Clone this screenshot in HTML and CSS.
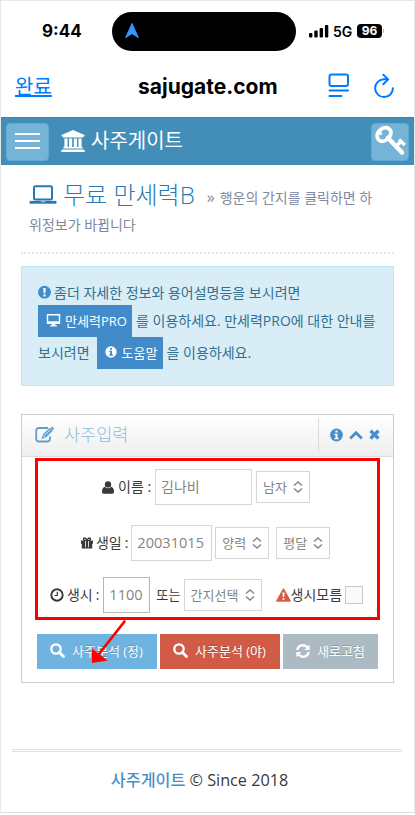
FILE: index.html
```html
<!DOCTYPE html>
<html lang="ko">
<head>
  <meta charset="UTF-8" />
  <meta name="viewport" content="width=device-width, initial-scale=1.0"/>
  <title>사주게이트</title>
  <link rel="stylesheet" href="styles.css">
</head>
<body>
  <div class="screen">
    <div class="status-bar">
      <span class="time">9:44</span>
      <div class="island">
        <svg width="14" height="16" viewBox="0 0 14 16"><path d="M7 .5 13.3 14.6 7 10.6.7 14.6Z" fill="#3598fe" stroke="#3598fe" stroke-linejoin="round"/></svg>
      </div>
      <svg class="signal" width="20" height="13" viewBox="0 0 20 13" fill="#000"><rect x="0" y="8" width="3.4" height="4.5" rx="1"/><rect x="5.3" y="5.5" width="3.4" height="7" rx="1"/><rect x="10.6" y="3" width="3.4" height="9.5" rx="1"/><rect x="15.9" y="0" width="3.4" height="12.5" rx="1"/></svg>
      <span class="network">5G</span>
      <span class="battery">96</span>
      <i class="battery-cap"></i>
    </div>

    <div class="browser-bar">
      <a class="done" href="#">완료</a>
      <span class="address">sajugate.com</span>
      <svg class="reader" width="22" height="26" viewBox="0 0 22 26" fill="none" stroke="#007aff" stroke-width="2" stroke-linecap="round"><rect x="1.5" y="1.5" width="18.5" height="11.5" rx="2"/><path d="M1.5 17.6H20M1.5 23H13.5"/></svg>
      <svg class="reload" width="22" height="26" viewBox="0 0 22 26" fill="none" stroke="#007aff" stroke-width="2" stroke-linecap="round" stroke-linejoin="round"><path d="M14.8 6.3H10.6A8.9 8.9 0 1 0 19.9 15.2M10.3 1.7 15.2 6.4 10.3 11.3"/></svg>
    </div>

    <div class="navbar">
      <button class="menu-btn"><i></i><i></i><i></i></button>
      <svg class="bank" width="24" height="24" viewBox="0 0 24 24" fill="#fff"><path d="M12 1 23.5 6V7.6H22V8.5H2V7.6H.5V6ZM3.4 9.5H6.6V18H8V9.5H11.2V18H12.8V9.5H16V18H17.4V9.5H20.6V18H21.6V19.6H2.4V18H3.4ZM1.6 20.4H22.4L23.8 21.6V23H.2V21.6Z"/></svg>
      <span class="brand">사주게이트</span>
      <button class="key-btn">
        <svg width="34" height="34" viewBox="0 0 34 34" fill="none" stroke="#fff"><path d="M4.2 12.5C3.6 8.2 8.8 3.2 13 3.6 17.3 4 19.3 8.3 16.8 12.3 14.5 16 10.6 18 7.6 17 5.5 16.2 4.5 14.6 4.2 12.5Z" stroke-width="3.8"/><circle cx="7.6" cy="9.6" r="1.6" fill="#fff" stroke="none"/><path d="M15 14 29 28.5" stroke-width="4.6" stroke-linecap="round"/><path d="M23.5 22 28.5 17M26 15.6 31.8 21" stroke-width="3.4"/></svg>
      </button>
    </div>

    <div class="page-header">
      <h1>
        <svg class="laptop" width="28" height="20" viewBox="0 0 28 20" fill="none" stroke="#2679b5" stroke-width="2"><rect x="5" y="1.3" width="18" height="13.2" rx="1.5"/><path d="M.6 17.3H27.4" stroke-width="2.8"/><path d="M12 16.7H16" stroke="#fff" stroke-width=".7"/></svg>
        <span class="title">무료 만세력B</span>
        <small><span class="raquo">»</span>행운의 간지를 클릭하면 하</small>
      </h1>
      <small>위정보가 바뀝니다</small>
    </div>

    <div class="alert">
      <div class="alert-line">
        <svg class="mark" width="13" height="14" viewBox="0 0 13 14"><circle cx="6.5" cy="7.2" r="6.4" fill="#428bca"/><path d="M5.2 3H7.8L7.3 8.2H5.7ZM5.5 9.3H7.5V11.4H5.5Z" fill="#fff"/></svg>
        <span>좀더 자세한 정보와 용어설명등을 보시려면</span>
      </div>
      <div class="alert-line">
        <a class="btn-pro"><svg width="15" height="13" viewBox="0 0 15 13"><path d="M1.5.8H13.5V9H1.5Z" fill="none" stroke="#fff" stroke-width="1.4"/><path d="M1 7.3H14V9.7H1ZM6 9H9L9.5 11.5H11V12.6H4V11.5H5.5Z" fill="#fff"/></svg>만세력PRO</a>
        <span>를 이용하세요. 만세력PRO에 대한 안내를</span>
      </div>
      <div class="alert-line">
        <span>보시려면</span>
        <a class="btn-help"><svg width="12" height="12" viewBox="0 0 12 12"><circle cx="6" cy="6" r="5.7" fill="#fff"/><path d="M5 2H7V3.7H5ZM4.2 4.8H7V8.6H8V9.8H4.2V8.6H5.1V5.9H4.2Z" fill="#428bca"/></svg>도움말</a>
        <span>을 이용하세요.</span>
      </div>
    </div>

    <div class="widget">
      <div class="widget-header">
        <svg class="edit" width="20" height="17" viewBox="0 0 20 17" fill="none" stroke="#629fca"><path d="M13 2H4Q1.2 2 1.2 4.8V12.7Q1.2 15.5 4 15.5H12.2Q15 15.5 15 12.7V10.5" stroke-width="1.8"/><path d="M9.2 10.3 16.2 3.3" stroke-width="4.4"/><path d="M16.3 1.2 18.6 3.5" stroke-width="2.2"/><path d="M6.5 12.9 7.4 9.4 10 12Z" fill="#629fca" stroke="none"/><path d="M9.5 9.3 14.8 4" stroke="#fff" stroke-width=".8"/></svg>
        <h5>사주입력</h5>
        <div class="widget-toolbar">
          <svg width="13" height="14" viewBox="0 0 12 12"><circle cx="6" cy="6" r="5.9" fill="#478fca"/><path d="M5 1.8H7V3.6H5ZM4.1 4.8H7V8.7H8V10H4.1V8.7H5.1V6H4.1Z" fill="#fff"/></svg>
          <svg width="14" height="10" viewBox="0 0 14 10" fill="none" stroke="#478fca" stroke-width="2.8"><path d="M1.2 8.4 7 2.8 12.8 8.4"/></svg>
          <svg width="11" height="11" viewBox="0 0 11 11" stroke="#478fca" stroke-width="3.4"><path d="M1.5 1.7 9.5 9.5M9.5 1.7 1.5 9.5"/></svg>
        </div>
      </div>

      <div class="widget-main">
        <div class="row row-name">
          <svg width="12" height="13" viewBox="0 0 12 13" fill="#393939"><circle cx="6" cy="3.4" r="3.2"/><path d="M2.7 5.7Q6 9 9.3 5.7 12 6.6 12 11 12 12.8 10.4 12.8H1.6Q0 12.8 0 11 0 6.6 2.7 5.7Z"/></svg>
          <label>이름 :</label>
          <input class="name" type="text" value="김나비" />
          <div class="select">남자<svg class="sort" viewBox="0 0 10 12"><path d="M1 4.5 5 1 9 4.5M1 7.5 5 11 9 7.5"/></svg></div>
        </div>
        <div class="row row-birth">
          <svg width="12" height="12" viewBox="0 0 12 12" fill="#393939"><path d="M0 3.6H12V6.8H11.2V11.5H.8V6.8H0Z"/><path d="M6 3.6C2 4 1.8 1 3.6 1 5 1 5.6 2.5 6 3.6 6.4 2.5 7 1 8.4 1 10.2 1 10 4 6 3.6Z" fill="none" stroke="#393939" stroke-width="1.3"/><path d="M4.5 4V10.3M7.5 4V10.3" stroke="#fff" stroke-width=".8"/></svg>
          <label>생일 :</label>
          <input class="birth" type="text" value="20031015" />
          <div class="select">양력<svg class="sort" viewBox="0 0 10 12"><path d="M1 4.5 5 1 9 4.5M1 7.5 5 11 9 7.5"/></svg></div>
          <div class="select leap">평달<svg class="sort" viewBox="0 0 10 12"><path d="M1 4.5 5 1 9 4.5M1 7.5 5 11 9 7.5"/></svg></div>
        </div>
        <div class="row row-time">
          <svg width="14" height="14" viewBox="0 0 14 14" fill="none" stroke="#393939"><circle cx="7" cy="7" r="5.7" stroke-width="1.9"/><path d="M7.3 3.7V7.5H4.6" stroke-width="1.2"/></svg>
          <label>생시 :</label>
          <input class="hour" type="text" value="1100" />
          <span class="or">또는</span>
          <div class="select ganji">간지선택<svg class="sort" viewBox="0 0 10 12"><path d="M1 4.5 5 1 9 4.5M1 7.5 5 11 9 7.5"/></svg></div>
          <svg class="warn" width="15" height="14" viewBox="0 0 15 14"><path d="M7.5 1 14.2 13H.8Z" fill="#dd5a43" stroke="#dd5a43" stroke-width="1.4" stroke-linejoin="round"/><path d="M6.4 4.6H8.6L8.2 9H6.8ZM6.6 10H8.4V11.8H6.6Z" fill="#fff"/></svg>
          <span class="unknown">생시모름</span>
          <i class="check"></i>
        </div>
        <div class="actions">
          <button class="btn-info"><svg width="15" height="15" viewBox="0 0 15 15" fill="none" stroke="#fff"><circle cx="6" cy="6" r="4.7" stroke-width="2.3"/><path d="M9.3 9.3 13.5 13.5" stroke-width="2.8" stroke-linecap="round"/></svg>사주분석 (정)</button>
          <button class="btn-danger"><svg width="15" height="15" viewBox="0 0 15 15" fill="none" stroke="#fff"><circle cx="6" cy="6" r="4.7" stroke-width="2.3"/><path d="M9.3 9.3 13.5 13.5" stroke-width="2.8" stroke-linecap="round"/></svg>사주분석 (야)</button>
          <button class="btn-reset"><svg width="14" height="14" viewBox="0 0 14 14"><path d="M1.3 6C2 1 8-.2 11.4 3.3M12.7 8C12 13 6 14.2 2.6 10.7" fill="none" stroke="#fff" stroke-width="2.3"/><path d="M13.6.8V6H8.4ZM.4 13.2V8H5.6Z" fill="#fff"/></svg>새로고침</button>
        </div>
      </div>
    </div>

    <div class="footer"><b>사주게이트</b> © Since 2018</div>

    <!-- guide marks over the form -->
    <div class="guide-box"></div>
    <svg class="guide-arrow" width="40" height="48" viewBox="0 0 40 48"><path d="M35.5 3.5 10 36" stroke="#f00" stroke-width="2.7" stroke-linecap="round"/><path d="M3 45 3 30.5 18.5 42.5Z" fill="#f00"/></svg>
  </div>
</body>
</html>
```
FILE: styles.css
```css
* {
  box-sizing: border-box;
}

body {
  margin: 0;
  background: #fff;
  font-family: "Open Sans", "Noto Sans CJK KR", sans-serif;
  font-size: 14px;
  color: #393939;
}

svg {
  display: block;
  flex: none;
}

.screen {
  position: relative;
  width: 415px;
  height: 813px;
  border: 1px solid #e8e8e8;
  border-bottom-color: #ddd;
  overflow: hidden;
  white-space: nowrap;
}

/* phone bars */
.status-bar {
  display: flex;
  align-items: center;
  height: 59px;
  padding: 1px 0 0 41px;
  font-family: Inter, sans-serif;
  font-weight: 700;
  color: #000;
}

.time {
  width: 70px;
  font-size: 17px;
}

.island {
  width: 184px;
  height: 39px;
  padding: 11px 0 0 13px;
  border-radius: 20px;
  background: #000;
}

.signal {
  margin-left: 13px;
}

.network {
  width: 24px;
  margin-left: 4px;
  font-size: 14px;
  font-weight: 600;
}

.battery {
  width: 25px;
  height: 14px;
  border-radius: 4px;
  background: #000;
  color: #fff;
  font-size: 12px;
  line-height: 14px;
  text-align: center;
}

.battery-cap {
  width: 1px;
  height: 4px;
  margin-left: 1px;
  background: #bbb;
}

.browser-bar {
  display: flex;
  align-items: center;
  height: 57px;
  padding-left: 14px;
  padding-bottom: 5px;
}

.done {
  width: 123px;
  color: #007aff;
  font-family: "Noto Sans CJK KR", sans-serif;
  font-size: 20px;
  line-height: 28px;
  text-underline-offset: 1px;
}

.address {
  width: 190px;
  color: #000;
  font-family: Inter, sans-serif;
  font-size: 21px;
  font-weight: 700;
}

.reload {
  margin-left: 23px;
}

/* site */
.navbar {
  display: flex;
  align-items: center;
  height: 48px;
  padding: 0 5px;
  border-top: 1px solid #3d7fa6;
  background: #438eb9;
}

.navbar button {
  height: 38px;
  border: 1px solid #62a8d1;
  border-radius: 4px;
  background: #75b3d7;
}

.menu-btn {
  display: flex;
  flex-direction: column;
  justify-content: center;
  gap: 4px;
  width: 43px;
  padding: 0 8px 2px;
}

.menu-btn i {
  height: 2px;
  background: #fff;
}

.menu-btn i + i {
  margin-top: 1px;
}

.bank {
  margin: 0 0 2px 12px;
}

.brand {
  margin-left: 6px;
  padding-bottom: 2px;
  color: #fff;
  font-size: 20px;
  line-height: 28px;
}

.key-btn {
  width: 38px;
  margin-left: auto;
  padding: 0 1px 2px;
}

.page-header {
  height: 89px;
  margin: 0 20px;
  padding: 13px 8px 0;
  border-bottom: 2px dotted #e6e6e6;
}

h1 {
  display: flex;
  align-items: center;
  height: 34px;
  margin: 0;
  font-size: 24px;
  line-height: 34px;
  color: #2679b5;
}

.title {
  margin-left: 6px;
  font-weight: 200;
}

small {
  color: #8089a0;
  font-size: 14px;
  font-weight: 400;
  line-height: 26px;
}

h1 small {
  margin: 5px 0 0 12px;
}

.page-header > small {
  display: block;
}

.raquo {
  margin-right: 5px;
  font-size: 16px;
}

.alert {
  height: 120px;
  margin: 12px 20px 0;
  padding: 11px 16px;
  border: 1px solid #bce8f1;
  background: #d9edf7;
  color: #31708f;
}

.alert-line {
  display: flex;
  align-items: center;
  height: 32px;
}

.alert-line:first-child {
  height: 27px;
}

.alert-line span {
  padding-bottom: 3px;
}

.alert-line:first-child span {
  padding-bottom: 0;
}

.mark {
  margin-right: 3px;
}

.alert-line a {
  display: flex;
  align-items: center;
  height: 32px;
  padding-bottom: 2px;
  background: #428bca;
  color: #fff;
  font-size: 13px;
}

.btn-pro {
  width: 94px;
  margin-right: 4px;
  padding-left: 8px;
  gap: 4px;
}

.btn-help {
  width: 66px;
  margin: 0 4px 0 7px;
  padding-left: 8px;
  gap: 5px;
}

.widget {
  height: 269px;
  margin: 28px 20px 0;
  border: 1px solid #ccc;
}

.widget-header {
  display: flex;
  align-items: center;
  height: 42px;
  padding: 0 0 2px 13px;
  border-bottom: 1px solid #ddd;
  background: linear-gradient(#fff, #eee);
}

h5 {
  margin: 0 0 2px 9px;
  color: #8fbcd9;
  font-size: 17.5px;
  font-weight: 200;
}

.widget-toolbar {
  display: flex;
  align-items: center;
  gap: 6px;
  width: 75px;
  height: 33px;
  margin-left: auto;
  padding-left: 11px;
  border-left: 1px solid #d9d9d9;
}

.row {
  display: flex;
  align-items: center;
  height: 57px;
}

.row-name {
  padding: 3px 0 0 80px;
}

.row-birth {
  padding: 1px 0 0 59px;
}

.row-time {
  height: 48px;
  padding-left: 28px;
}

label {
  margin: 0 4px 2px;
}

.row-birth label,
.row-time label {
  margin: 0 3px 2px;
  letter-spacing: -.2px;
}

.row-time label {
  margin-right: 4px;
}

input {
  height: 36px;
  padding: 0 5px 2px;
  border: 1px solid #d5d5d5;
  color: #858585;
  font: 14px "Open Sans", "Noto Sans CJK KR", sans-serif;
}

.name {
  width: 97px;
}

.birth {
  width: 81px;
  font-size: 14.6px;
}

.hour {
  width: 47px;
  border-color: #b5b5b5;
  font-size: 14.6px;
}

.select {
  display: flex;
  align-items: center;
  justify-content: space-between;
  width: 54px;
  height: 32px;
  margin-left: 3px;
  padding: 0 6px 1px;
  border: 1px solid #d5d5d5;
  color: #858585;
  font-size: 13px;
}

.row-name .select {
  margin-left: 4px;
}

.leap {
  margin-left: 7px;
}

.ganji {
  width: 78px;
}

.sort {
  width: 10px;
  height: 12px;
  fill: none;
  stroke: #858585;
  stroke-width: 1.4;
}

.or {
  margin-left: 6px;
  padding-bottom: 1px;
  font-size: 13.2px;
}

.warn {
  margin-left: 14px;
}

.unknown {
  padding-bottom: 2px;
}

.check {
  width: 18px;
  height: 18px;
  margin-left: 3px;
  border: 1px solid #c8c8c8;
  background: #fafafa;
}

.actions {
  display: flex;
  gap: 3px;
  padding: 15px 15px 0;
}

.actions button {
  display: flex;
  align-items: center;
  height: 35px;
  padding: 0 0 2px 13px;
  border: 0;
  color: #fff;
  font: 13px "Open Sans", "Noto Sans CJK KR", sans-serif;
  text-shadow: 0 -1px 0 rgba(0, 0, 0, .2);
  gap: 7px;
}

.actions .btn-info {
  width: 120px;
  background: #6fb3e0;
}

.actions .btn-danger {
  width: 120px;
  background: #d15b47;
}

.actions .btn-reset {
  width: 95px;
  background: #abbac3;
}

.footer {
  margin: 66px 12px 0 11px;
  padding: 16px 15px 0 0;
  border-top: 3px double #e0e0e0;
  font-size: 16.2px;
  line-height: 24px;
  text-align: center;
}

.footer b {
  color: #478fca;
  font-weight: 500;
}

.guide-box {
  position: absolute;
  left: 34px;
  top: 457px;
  width: 345px;
  height: 162px;
  border: 3px solid #f00;
}

.guide-arrow {
  position: absolute;
  left: 88px;
  top: 617px;
}
```
